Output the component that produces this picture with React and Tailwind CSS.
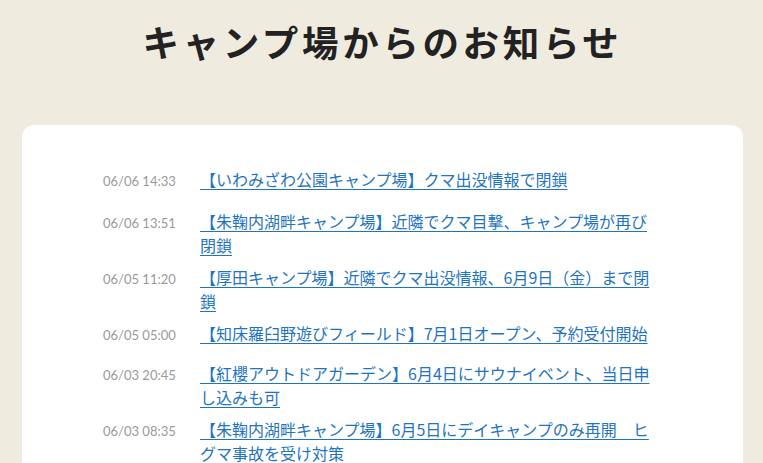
const news = [
  { date: "06/06 14:33", title: "【いわみざわ公園キャンプ場】クマ出没情報で閉鎖" },
  { date: "06/06 13:51", title: "【朱鞠内湖畔キャンプ場】近隣でクマ目撃、キャンプ場が再び閉鎖" },
  { date: "06/05 11:20", title: "【厚田キャンプ場】近隣でクマ出没情報、6月9日（金）まで閉鎖" },
  { date: "06/05 05:00", title: "【知床羅臼野遊びフィールド】7月1日オープン、予約受付開始" },
  { date: "06/03 20:45", title: "【紅櫻アウトドアガーデン】6月4日にサウナイベント、当日申し込みも可" },
  { date: "06/03 08:35", title: "【朱鞠内湖畔キャンプ場】6月5日にデイキャンプのみ再開　ヒグマ事故を受け対策" },
];

export default function App() {
  return (
    <div className="min-h-screen bg-[#efebdf] pl-[22px] pr-[20px] pb-10 font-['Noto_Sans_CJK_JP',sans-serif]">
      <h1 className="pt-[15px] pb-[56px] text-center text-[36.5px] font-bold leading-[54px] tracking-[0.1em] text-[#222222]">
        キャンプ場からのお知らせ
      </h1>
      <div className="rounded-xl bg-white pl-[81px] pr-[80px] pt-[42px] pb-[60px]">
        <ul className="flex flex-col">
          {news.map((item, i) => (
            <li
              key={item.date + item.title}
              className={`flex items-baseline pb-2 ${i === 0 ? "min-h-[42px]" : "min-h-[40px]"}`}
            >
              <span className="w-[97px] shrink-0 font-['Lato',sans-serif] text-[13px] leading-6 text-[#9a9a9a]">
                {item.date}
              </span>
              <a
                href="#"
                className="min-w-0 flex-1 text-[16px] leading-6 text-[#1f74c0] underline underline-offset-[3px]"
              >
                {item.title}
              </a>
            </li>
          ))}
        </ul>
      </div>
    </div>
  );
}
